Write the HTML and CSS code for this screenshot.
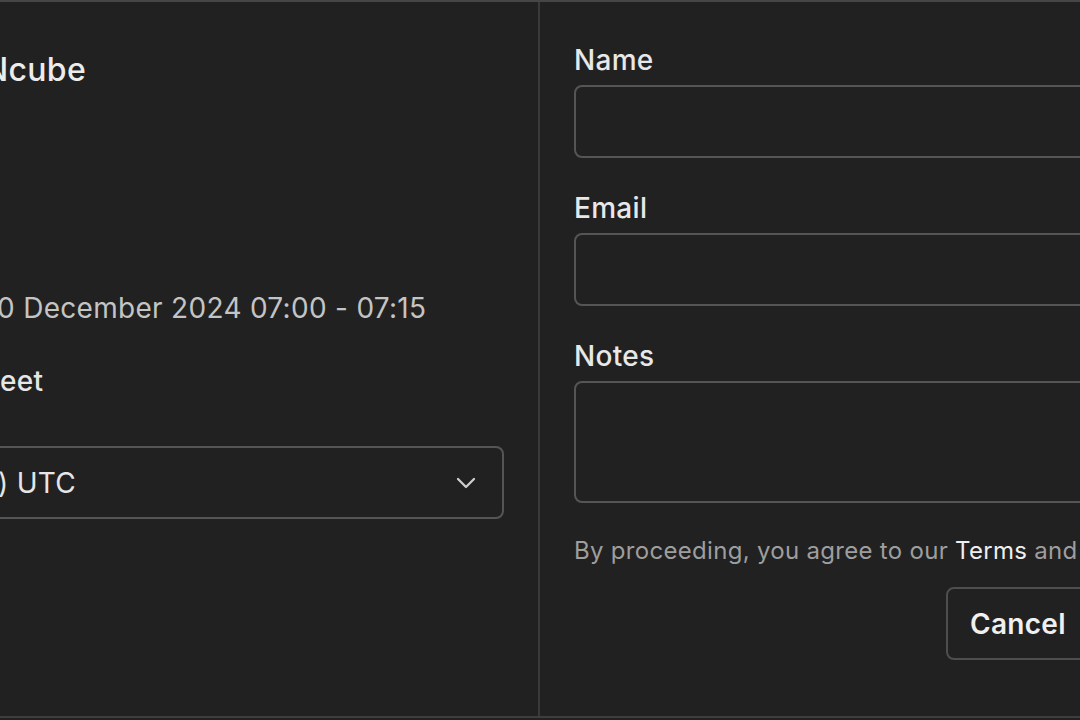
FILE: index.html
```html
<!DOCTYPE html>
<html lang="en">
<head>
<meta charset="utf-8">
<title>Booking</title>
<link rel="stylesheet" href="styles.css">
</head>
<body>
<div class="card">
  <aside class="info">
    <div class="host">Ncube</div>
    <div class="date">0 December 2024 07:00 - 07:15</div>
    <div class="location">eet</div>
    <div class="tz-select">
      <span class="tz-text">) UTC</span>
      <svg class="chevron" viewBox="0 0 24 24" width="32" height="32" aria-hidden="true"><path d="M6 9l6 6 6-6" fill="none" stroke="currentColor" stroke-width="1.7" stroke-linecap="round" stroke-linejoin="round"/></svg>
    </div>
  </aside>
  <form class="form">
    <div class="field">
      <label class="label">Name</label>
      <div class="input"></div>
    </div>
    <div class="field">
      <label class="label">Email</label>
      <div class="input"></div>
    </div>
    <div class="field">
      <label class="label">Notes</label>
      <div class="input textarea"></div>
    </div>
    <p class="terms">By proceeding, you agree to our <span class="em">Terms</span> and</p>
    <div class="actions">
      <button type="button" class="btn">Cancel</button>
      <button type="button" class="btn primary">Confirm</button>
    </div>
  </form>
</div>
</body>
</html>
```

FILE: styles.css
```css
html, body {
  margin: 0;
  padding: 0;
  background: #212121;
  overflow: hidden;
  width: 1080px;
  height: 720px;
}
body {
  font-family: Inter, "Noto Sans", sans-serif;
  color: #e8e8e8;
  letter-spacing: 0.3px;
}
.card {
  display: flex;
  height: 714px;
  border-top: 2px solid #464646;
  border-bottom: 2px solid #3e3e3e;
  width: 1400px;
}
.info {
  width: 504px;
  flex: none;
  padding: 40px 34px 0 0;
  border-right: 2px solid #3a3a3a;
  display: flex;
  flex-direction: column;
}
.host {
  font-size: 32px;
  font-weight: 500;
  line-height: 40px;
  margin: 8px 0 0 -16px;
  color: #ececec;
}
.date {
  font-size: 28px;
  line-height: 36px;
  color: #c4c4c4;
  margin: 200px 0 0 -3px;
  white-space: nowrap;
}
.location {
  font-size: 28px;
  font-weight: 500;
  line-height: 36px;
  color: #e6e6e6;
  margin: 37px 0 0 0;
}
.tz-select {
  margin: 47px 0 0 -20px;
  height: 69px;
  border: 2px solid #555;
  border-radius: 8px;
  display: flex;
  align-items: center;
  justify-content: space-between;
  padding: 0 20px 0 16px;
}
.tz-text {
  font-size: 28px;
  color: #e6e6e6;
}
.chevron {
  color: #cfcfcf;
}
.form {
  flex: none;
  width: 700px;
  padding: 40px 0 0 34px;
  display: flex;
  flex-direction: column;
}
.field {
  display: flex;
  flex-direction: column;
  margin-bottom: 32px;
}
.label {
  font-size: 28px;
  font-weight: 500;
  line-height: 36px;
  color: #e8e8e8;
  margin-bottom: 7px;
}
.input {
  height: 69px;
  border: 2px solid #555;
  border-radius: 8px;
}
.textarea {
  height: 118px;
}
.field:last-of-type {
  margin-bottom: 24px;
}
.terms {
  margin: 0;
  font-size: 24px;
  line-height: 32px;
  color: #9e9e9e;
  white-space: nowrap;
}
.em {
  color: #efefef;
}
.actions {
  display: flex;
  justify-content: flex-start;
  gap: 16px;
  margin-top: 20px;
  padding-left: 372px;
}
.btn {
  height: 73px;
  padding: 0 22px;
  border: 2px solid #4e4e4e;
  border-radius: 8px;
  background: transparent;
  color: #f0f0f0;
  font-family: Inter, "Noto Sans", sans-serif;
  font-size: 28px;
  font-weight: 600;
  letter-spacing: 0.3px;
}
.primary {
  background: #f0f0f0;
  color: #111;
}
```
